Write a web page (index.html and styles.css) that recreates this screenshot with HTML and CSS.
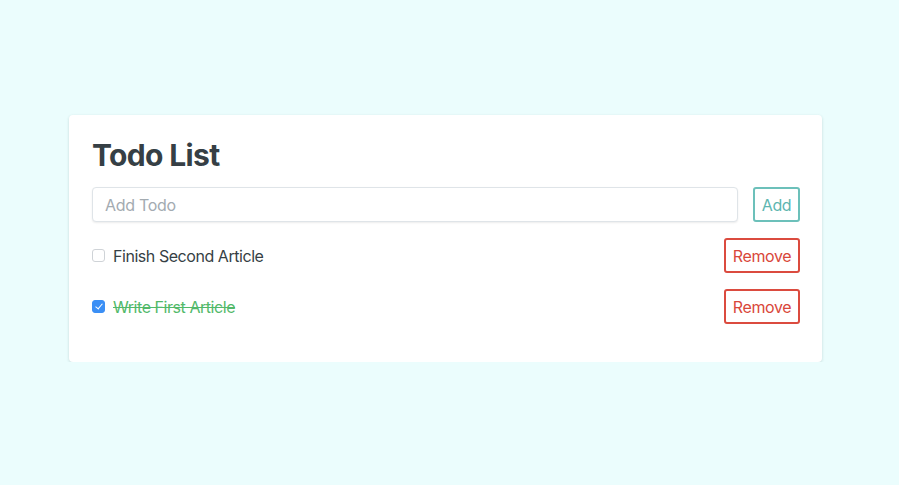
FILE: index.html
```html
<!DOCTYPE html>
<html>
<head>
<meta charset="utf-8">
<link rel="stylesheet" href="styles.css">
</head>
<body>
<div class="card">
  <h1 class="title">Todo List</h1>
  <form class="add-row" onsubmit="return false">
    <input class="add-input" type="text" placeholder="Add Todo">
    <button class="btn btn-add" type="button">Add</button>
  </form>
  <ul class="todos">
    <li class="todo">
      <label class="todo-label"><input class="check" type="checkbox"><span class="todo-text">Finish Second Article</span></label>
      <button class="btn btn-remove" type="button">Remove</button>
    </li>
    <li class="todo">
      <label class="todo-label"><input class="check" type="checkbox" checked><span class="todo-text done">Write First Article</span></label>
      <button class="btn btn-remove" type="button">Remove</button>
    </li>
  </ul>
</div>
</body>
</html>
```
FILE: styles.css
```css
html, body {
  margin: 0;
  padding: 0;
}
body {
  background: #ebfdfd;
  font-family: Inter, "Noto Sans", sans-serif;
  color: #363f45;
  padding-top: 115px;
}
.card {
  width: 753px;
  box-sizing: border-box;
  margin-left: 69px;
  background: #fff;
  border-radius: 4px;
  box-shadow: 0 1px 3px rgba(40, 80, 80, 0.2);
  padding: 23px 22px 38px 23px;
}
.title {
  margin: 0 0 15px 0;
  font-size: 30px;
  font-weight: 700;
  line-height: 34px;
  letter-spacing: -0.65px;
  color: #363f45;
}
.add-row {
  display: flex;
  gap: 15px;
  margin: 0 0 16px 0;
}
.add-input {
  flex: 1;
  height: 35px;
  box-sizing: border-box;
  border: 1px solid #dfe4e8;
  border-radius: 4px;
  box-shadow: 0 1px 2px rgba(0, 0, 0, 0.08);
  padding: 0 12px;
  font-family: inherit;
  font-size: 16px;
  letter-spacing: -0.3px;
  color: #363f45;
  outline: none;
}
.add-input::placeholder {
  color: #a3abb1;
}
.btn {
  height: 35px;
  box-sizing: border-box;
  background: #fff;
  border-radius: 3px;
  font-family: inherit;
  font-size: 16px;
  letter-spacing: -0.4px;
  padding: 0;
  cursor: pointer;
}
.btn-add {
  border: 2px solid #6cc0ba;
  color: #5db6b0;
  width: 47px;
}
.btn-remove {
  border: 2px solid #db4b3f;
  color: #d9473b;
  width: 76px;
}
.todos {
  list-style: none;
  margin: 0;
  padding: 0;
  display: flex;
  flex-direction: column;
  gap: 16px;
}
.todo {
  display: flex;
  align-items: center;
  justify-content: space-between;
}
.todo-label {
  display: flex;
  align-items: center;
  gap: 8px;
  font-size: 16px;
  letter-spacing: -0.45px;
}
.check {
  appearance: none;
  -webkit-appearance: none;
  margin: 0;
  width: 13px;
  height: 13px;
  box-sizing: border-box;
  border: 1px solid #cfd3d7;
  border-radius: 3px;
  background: #fff;
  position: relative;
}
.check:checked {
  background: #3b8ff5;
  border-color: #3b8ff5;
}
.check:checked::after {
  content: "";
  position: absolute;
  left: 3.5px;
  top: 1px;
  width: 3px;
  height: 6px;
  border: solid #fff;
  border-width: 0 1.6px 1.6px 0;
  transform: rotate(40deg);
}
.todo-text {
  color: #363f45;
}
.todo-text.done {
  color: #52b96a;
  text-decoration: line-through;
}
```
